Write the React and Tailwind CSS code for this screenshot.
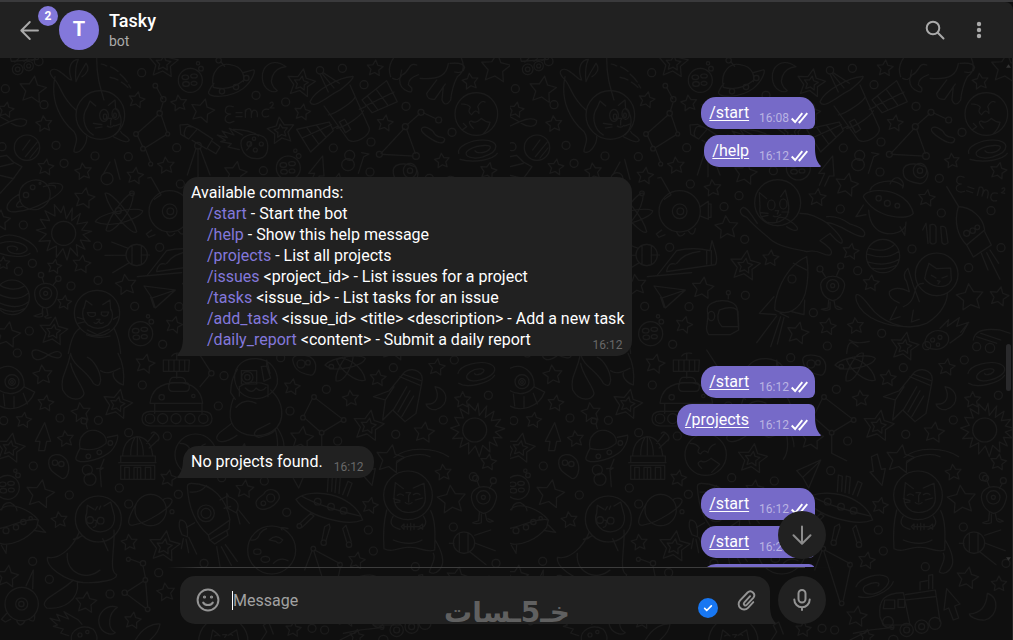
import React from "react";

/* ---------- wallpaper ---------- */

const STARS = [
  [98, 270, 42, 8], [410, 300, 25, 12], [537, 310, 25, -8], [607, 333, 37, 14], [907, 337, 25, 10],
  [1125, 205, 25, 5], [1411, 245, 25, -8], [1487, 205, 46, 6], [18, 330, 24, 10], [132, 372, 25, -6],
  [1155, 370, 25, 8], [498, 497, 26, -5], [137, 502, 25, 8], [250, 515, 26, -8], [405, 528, 26, 8],
  [706, 520, 36, 10], [1326, 483, 23, -6], [1465, 513, 26, 12], [253, 595, 32, 10], [0, 662, 32, 5],
  [163, 800, 22, 10], [245, 793, 28, 8], [10, 790, 20, 0], [378, 855, 32, -8], [193, 908, 22, 8],
  [22, 1005, 40, 10], [522, 975, 26, 14], [608, 565, 26, -6], [1010, 555, 36, 12], [922, 593, 27, 6],
  [650, 683, 36, -5], [1022, 755, 25, 10], [782, 775, 25, 5], [578, 865, 34, 8], [1083, 850, 25, 6],
  [1380, 893, 42, -6], [1467, 890, 30, 12], [863, 1000, 34, 12], [953, 980, 26, 10],
  [1037, 978, 25, -6], [1250, 595, 26, 8], [435, 1092, 30, 12], [128, 1125, 30, -6], [137, 1210, 25, 8],
  [243, 1238, 30, -8], [71, 1261, 24, 8], [197, 1317, 25, -8], [120, 1483, 44, 10], [178, 1560, 25, -8],
  [388, 1628, 25, -6], [505, 1435, 25, 10], [734, 1468, 28, 6], [876, 1161, 25, 10], [1052, 1196, 25, -6],
  [905, 1315, 36, 8], [1272, 1298, 32, 8], [1134, 1135, 25, 6], [1310, 1102, 26, 8], [1388, 1200, 25, 0],
  [1465, 1387, 25, 8], [1330, 1418, 25, -6], [1170, 1378, 44, 10], [1110, 1517, 25, 12], [1355, 1500, 44, -6],
  [1070, 1682, 26, 10], [22, 1730, 34, 8], [258, 1808, 33, 6], [498, 1777, 28, -8], [398, 1862, 26, 8],
  [880, 1888, 24, 6], [1372, 1735, 34, 10], [1467, 1752, 24, 0], [1040, 1850, 32, 8], [1070, 1910, 22, 6],
];

const DOUBLE_STARS = [
  [490, 190, 46, 5], [903, 250, 44, 10], [843, 393, 42, -8], [160, 995, 44, 8], [705, 798, 47, 8],
  [1183, 1040, 44, 10], [352, 1213, 46, 12], [30, 1345, 46, 10], [493, 1640, 48, 8], [1105, 1278, 48, 10],
  [727, 1377, 46, 8],
];

const DOTS = [
  [16, 266], [132, 314], [425, 218], [768, 286], [857, 306], [1027, 205], [1092, 254], [1218, 319],
  [1356, 397], [1113, 426], [1000, 444], [530, 443], [385, 470], [285, 468], [192, 490], [168, 436],
  [790, 512], [1110, 516], [70, 675], [293, 738], [479, 742], [97, 790], [55, 814], [213, 858],
  [294, 841], [404, 919], [537, 920], [88, 993], [488, 1033], [1288, 535], [991, 627], [642, 620],
  [687, 587], [704, 718], [541, 552], [1206, 747], [1043, 812], [706, 886], [910, 938], [1376, 803],
  [1294, 639], [1443, 632], [1473, 743], [952, 1038], [1115, 1000], [1250, 1037], [52, 1059],
  [427, 1155], [672, 1127], [655, 1218], [870, 1233], [979, 1168], [1180, 1103], [1465, 1186],
  [1330, 1260], [1187, 1303], [1013, 1323], [386, 1298], [502, 1308], [180, 1254], [295, 1261],
  [11, 1262], [100, 1398], [208, 1485], [358, 1464], [535, 1483], [386, 1512], [793, 1443], [860, 1537],
  [1105, 1590], [1120, 1653], [1360, 1581], [98, 1684], [148, 1738], [330, 1782], [476, 1718],
  [612, 1690], [1246, 1700], [1488, 1690], [974, 1890], [665, 1433], [962, 1412], [842, 1073],
  [1363, 1080], [6, 440], [1420, 1430], [936, 1885],
];

function starPoints([cx, cy, r, rot], inner = 0.5) {
  return Array.from({ length: 10 }, (_, i) => {
    const a = ((rot - 90 + i * 36) * Math.PI) / 180;
    const d = i % 2 ? r * inner : r;
    return `${(cx + d * Math.cos(a)).toFixed(1)},${(cy + d * Math.sin(a)).toFixed(1)}`;
  }).join(" ");
}

const ring = (x, y, rx, ry = rx) =>
  `M${x - rx} ${y}a${rx} ${ry} 0 1 0 ${rx * 2} 0a${rx} ${ry} 0 1 0 ${-rx * 2} 0`;

const DOODLES = [
  /* diving cat */
  ring(301, 345, 73),
  "M262 322L270 303L287 318M325 316L345 300L347 326M262 322C245 345 248 385 280 405M347 326C372 350 366 385 345 405",
  ring(312, 346, 13, 18) + ring(347, 342, 11, 16) + ring(315, 350, 5, 8) + ring(345, 346, 4, 7),
  "M326 355h10l-4 6v14M322 378q10 8 20-2M280 370l26 4M286 384l20-3M360 372l-16 6",
  "M228 330C180 290 185 255 158 232C140 212 158 200 180 215C200 228 205 240 215 240C200 200 215 180 235 178C225 200 225 220 228 245C235 225 250 205 258 190C270 205 262 220 246 230",
  "M290 175C290 230 300 260 312 300M165 230C150 300 180 360 222 395C240 420 220 440 222 455C240 465 262 430 260 410M340 410C370 425 385 430 388 420C380 405 365 405 362 395",
  /* comet dashes */
  "M304 192q10 2 16 6M332 200q12 5 22 14M360 222q14 12 22 24M386 254l6 10M330 232q14 2 24 8M364 246q12 8 20 16",
  /* constellations */
  "M470 262L488 296M489 308L481 334M474 345L414 398M484 346L501 396M413 408L428 440M436 446L451 485M497 405L436 443",
  ring(466, 257, 7) + ring(490, 298, 8) + ring(479, 340, 8) + ring(408, 402, 7) + ring(503, 402, 6) + ring(429, 446, 7) + ring(452, 492, 6),
  "M1143 460L1212 386M1220 388L1246 460M1148 463L1238 468M1222 374L1258 342M1270 338L1308 356",
  ring(1138, 463, 9) + ring(1216, 380, 9) + ring(1248, 468, 10) + ring(1263, 337, 9) + ring(1316, 360, 9),
  "M948 1196L1026 1256M936 1198L912 1246M916 1256L958 1293M1024 1262L972 1294M965 1304V1360L1010 1382",
  ring(942, 1191, 7) + ring(909, 1253, 7) + ring(1031, 1260, 7) + ring(965, 1298, 7),
  "M392 1678L421 1688M429 1698L436 1732M430 1744L380 1776M382 1784L436 1824M437 1746L443 1820",
  ring(385, 1678, 6) + ring(429, 1690, 8) + ring(436, 1740, 7) + ring(374, 1778, 8) + ring(443, 1828, 7),
  "M944 1650L1018 1690M936 1652L914 1710M1021 1702L1000 1800M942 1655L990 1806",
  ring(940, 1646, 7) + ring(1020, 1694, 7) + ring(995, 1810, 7),
  "M590 1050L630 1112M628 1126L600 1160",
  ring(634, 1120, 8),
  /* moons */
  "M858 200C815 170 785 200 787 235C790 275 825 280 832 272C800 250 815 205 858 200Z",
  "M1305 1160C1345 1165 1350 1215 1310 1228C1295 1232 1280 1222 1278 1212C1310 1215 1320 1190 1305 1160Z",
  "M352 1822C320 1810 292 1840 297 1870C302 1900 335 1908 346 1898C320 1885 325 1840 352 1822Z",
  "M1432 1780C1470 1790 1465 1850 1425 1860C1400 1862 1380 1850 1378 1842C1415 1840 1430 1815 1432 1780Z",
  /* cratered planets */
  ring(571, 241, 36) + ring(556, 232, 10, 7) + ring(582, 228, 10, 6) + ring(558, 252, 10, 7) + ring(582, 250, 9, 6) + ring(594, 190, 5) + ring(603, 206, 7),
  ring(865, 504, 36) + ring(850, 495, 10, 7) + ring(876, 491, 10, 6) + ring(852, 515, 10, 7) + ring(876, 513, 9, 6) + ring(886, 452, 5) + ring(896, 468, 7),
  ring(422, 1001, 36) + ring(407, 992, 10, 7) + ring(433, 988, 10, 6) + ring(409, 1012, 10, 7) + ring(433, 1010, 9, 6) + ring(444, 949, 5) + ring(454, 965, 7),
  ring(22, 1462, 36) + ring(8, 1453, 10, 7) + ring(33, 1450, 10, 6) + ring(10, 1472, 10, 7) + ring(34, 1470, 9, 6) + ring(46, 1412, 5) + ring(54, 1426, 7),
  ring(815, 1650, 72) + ring(772, 1655, 11, 8) + ring(796, 1678, 13, 9) + "M752 1620q20 4 28-20q10-12 20-14M808 1620q20-20 40 0q-10 16-20 4zM820 1690q20-20 44-8M846 1590q-10-12 18-4",
  /* flying saucers */
  "M640 262C630 215 660 185 695 195C725 200 735 225 730 245M626 275C620 295 690 295 730 265C760 240 770 205 758 210L730 218M626 275Q632 260 642 250M640 262Q690 275 732 240M662 185l12 14",
  ring(656, 181, 8) + ring(666, 274, 8) + ring(708, 261, 8) + ring(739, 234, 8),
  "M240 1345C232 1310 260 1285 290 1292C315 1300 322 1318 318 1330M228 1372C222 1395 290 1385 325 1360C352 1340 358 1300 350 1306L322 1312M228 1372Q232 1358 240 1345Q285 1358 318 1330",
  ring(252, 1263, 9) + ring(265, 1369, 7) + ring(298, 1357, 7) + ring(331, 1329, 7) + "M258 1272l4 14",
  "M888 1498C930 1460 1060 1480 1088 1560C1040 1580 920 1550 888 1498ZM905 1488C940 1510 1020 1535 1080 1548M982 1475l3-50 12 4-2 45M1005 1478l4-50 12 4-4 48M1028 1484l16-40 12 6-14 38",
  ring(953, 1505, 10) + ring(993, 1520, 10) + ring(1031, 1532, 10) + ring(898, 1578, 7) + ring(971, 1628, 8) + ring(1047, 1634, 8),
  "M900 1570l32-30 10 8-36 34M966 1620l8-40 14-8 2 10-12 40M1040 1626l-12-40 10-10 16 50",
  /* alien saucer */
  ring(36, 1145, 21) + ring(36, 1146, 10) + ring(36, 1146, 4),
  "M0 1105C40 1085 75 1120 72 1160M0 1172C30 1190 60 1178 72 1160M72 1160l32 16M0 1218C30 1235 85 1225 104 1176M10 1182l4 36M42 1190v34M70 1180l12 32",
  /* formula */
  "M700 320q-24-8-24 14q2 8 16 8q-20 4-16 20q8 12 26 2M708 338h18M708 350h18M736 352v-22q2 10 2 0q12-10 16 4v18q0-20 8-22q12 0 10 20M806 328q-18-4-20 12q2 16 20 8M810 310q8-8 10 2q-2 6-10 12h12",
  "M1362 532q-22-10-22 12q2 8 14 8q-20 4-14 18q8 10 24 4M1374 560l18 6M1370 572l18 6M1402 586l6-24q10-4 12 8l-4 18q6-22 14-18q8 2 2 24M1462 580q-18-6-20 12q2 14 18 10M1476 566q10-6 8 4q-4 6-10 8l10 2",
  /* antenna satellite */
  "M930 305C940 330 980 290 1020 270C1060 240 1065 225 1055 230C1020 232 945 270 930 305ZM960 222L985 276M966 220L1002 264M970 218L1018 250M972 318L1045 420C1070 435 1110 405 1108 385L1050 255M985 345C1010 340 1060 305 1066 290M1010 385C1040 380 1085 345 1090 332",
  ring(960, 211, 11),
  "M1018 366l16-8 18 30-16 10zM1020 368l16 28M1086 300L1160 242L1192 305L1116 338ZM1104 290l30 40M1130 270l34 46M1096 318l86-42M890 388L988 366L1000 392L932 456ZM920 382l36 50M950 376l28 36M906 414l88-40M1078 328l18-8M1000 385l14-6",
  /* meteor */
  "M724 440C715 405 760 395 790 410C810 425 808 470 780 475C750 480 730 465 724 440ZM652 405l30 8-16-20 36 12-14-20 40 20M652 405l24 16-14 4 32 6-10 10 34 8M700 388q50 0 76 20M740 450q10-8 12-24",
  ring(748, 432, 7) + ring(766, 450, 6) + ring(762, 416, 5) + ring(784, 432, 6),
  "M214 1920C210 1890 245 1870 280 1888C292 1900 292 1920 290 1920M150 1855l30 8-10-20 36 14-14-22 42 24 12 14M150 1855l22 20-12 4 30 8-8 12 24 8",
  ring(240, 1905, 6) + ring(262, 1896, 5),
  "M1245 1030C1245 1000 1280 980 1310 1000C1325 1020 1310 1045 1280 1048C1255 1048 1245 1040 1245 1030ZM1290 985l26-26-4 20 36-26-8 26 36-12-24 30M1376 967l-20 36-36 26",
  ring(1268, 1020, 6) + ring(1290, 1012, 6) + ring(1284, 1034, 5),
  /* telescope */
  "M540 375l22-2 30 14-26 30-24-14ZM566 417q-20-6-10-30q4-12 20-6M592 387l46 30-18 30-44-26M638 425l22 16-12 20-24-14M594 445V530M588 445L562 525M600 445L630 525",
  ring(594, 437, 10),
  /* dog legs */
  "M1172 230C1160 200 1180 175 1180 175M1178 235q18 10 28-10M1206 225C1230 215 1225 185 1250 195M1205 210l-6 30q0 24 24 34q16 6 12-10l-10-10q0-20 30-30M1260 235C1320 240 1340 225 1345 190M1310 240l-30 40q0 20 24 18l32-46M1330 260l-4 40q10 24 26 0q4-40 20-70q30-20 10-60M1350 190q40-4 44 12q-4 20-30 14",
  /* earths */
  ring(1429, 342, 64) + "M1385 312q20 0 26 10q-10 14 4 22q12-20 22-4q0-14-4-20q10-20 22-14M1420 385q-20-20-6-22q12 10 30-8q10 10 26 12q-4 20-22 36M1390 370l10 10-14 10",
  ring(587, 1364, 62) + "M540 1330q20 0 28 14q-10 14 4 18q10-16 22-4q4-20 22-26M575 1405q-20-16-2-22q10 8 30-8l26 18-24 24",
  /* spirals */
  "M1376 460C1370 440 1410 420 1450 420C1500 420 1500 455 1450 470C1420 480 1390 470 1400 455C1420 435 1480 430 1470 445C1460 460 1430 462 1425 452M1380 478C1420 490 1480 480 1492 460",
  "M0 712C40 690 110 730 112 755M0 730C40 715 90 735 80 752C60 770 20 760 22 742C40 732 60 744 50 750M0 760C40 775 80 770 90 760",
  "M1374 1120C1380 1095 1440 1080 1470 1092C1500 1105 1480 1130 1440 1140C1400 1150 1390 1130 1410 1116C1430 1102 1460 1104 1450 1116C1440 1126 1424 1126 1424 1120M1376 1150C1400 1166 1470 1150 1484 1126",
  "M1038 1760C1050 1730 1110 1718 1130 1730C1150 1745 1120 1775 1090 1782C1060 1785 1050 1765 1070 1756C1090 1744 1116 1746 1104 1758M1046 1790C1080 1800 1140 1775 1150 1745",
  /* infinities and peanuts */
  "M1300 395C1270 370 1250 385 1276 405C1310 430 1330 435 1334 420C1336 405 1310 420 1300 395Z",
  "M0 378C20 370 60 345 80 362C80 385 50 380 38 372C20 360 0 350 0 350",
  "M96 1058C100 1040 125 1055 140 1062C160 1075 186 1080 184 1062C175 1045 150 1062 140 1068C110 1090 96 1075 96 1058Z",
  ring(1049, 466, 15) + ring(1044, 494, 19, 18) + ring(321, 536, 18) + ring(262, 1410, 15) + ring(270, 1438, 18),
  "M1075 520l16-50 16-8-22-4M344 478l16 60M330 486l-20 36M300 1408l12-30M304 1460l-4-50 10-6-20 2",
  /* arrows */
  "M968 468l-42 52h18l-16 36M968 468l4 60h-14l-14 30M134 1268l-28 56h14l-4 28h18l6-28h12ZM1084 1370l6 44-10 2 36 40 10-50-12 2-12-46ZM1310 1766l-8 64 14-6 14 36 16-6-12-36 16-6Z",
  /* potatoes */
  "M1180 520C1175 490 1210 485 1245 500C1265 525 1245 555 1225 550C1200 545 1182 540 1180 520Z" + ring(1230, 512, 8) + ring(1230, 512, 20, 22),
  "M880 1088C870 1065 900 1060 930 1070C960 1090 945 1130 930 1125C900 1120 885 1110 880 1088Z" + ring(903, 1092, 12) + ring(924, 1088, 7),
  "M146 1390C145 1360 180 1355 200 1380C215 1410 200 1440 185 1435C165 1420 148 1415 146 1390Z" + ring(165, 1388, 8) + ring(184, 1392, 8),
  "M768 1508C770 1490 790 1490 796 1475C815 1460 840 1475 838 1495C825 1525 770 1545 768 1508Z" + ring(812, 1494, 12) + ring(790, 1510, 7),
  /* ringed and striped planets */
  ring(81, 443, 38) + "M68 450l22-30M76 470l36-44M90 474l24-30",
  "M0 470l20-4 20 20 26 14-26 36-40-10M0 500l40-10M0 580L44 532",
  "M58 590C55 550 100 530 130 545C155 560 160 600 130 620C100 640 60 625 58 590ZM58 582C10 610 10 640 50 635C110 630 190 580 188 560C184 545 150 550 146 552M62 600C40 620 50 625 70 618M130 560q40-10 36 4",
  ring(98, 562, 7) + ring(78, 585, 8) + ring(120, 550, 3),
  ring(36, 892, 52) + "M0 856q40 22 74 2M-10 880q60 30 94 0M-10 905q60 30 96 0M0 925q40 20 76 0",
  ring(1119, 768, 50) + "M1076 745q50 16 78-12M1070 762q60 20 96-8M1074 786q50 16 94-8M1084 804q40 8 76-8",
  ring(452, 1530, 47) + "M408 1512C380 1560 380 1580 400 1575C440 1570 520 1520 516 1500C510 1490 490 1496 490 1500" + ring(516, 1535, 6),
  "M0 1530C30 1500 90 1530 115 1560L110 1582C80 1620 30 1640 0 1630M0 1585C30 1580 90 1550 115 1560M5 1530q4-24 26-22q20 10 20 24M20 1636l-2 24-14-24M115 1575l22 22-36-6",
  ring(70, 1566, 8) + ring(48, 1582, 8) + ring(18, 1592, 9) + ring(92, 1555, 5),
  "M1060 590C1070 560 1190 560 1210 640C1200 660 1100 660 1060 590ZM1080 570C1090 545 1150 530 1180 560M1076 630C1080 720 1170 710 1184 680M1140 552q10-22 26-18q20 12 12 30M1060 615l-22 35 30-6M1170 680l14 26 4-40",
  ring(1106, 595, 8) + ring(1132, 610, 9) + ring(1162, 617, 7),
  /* sun */
  ring(191, 700, 36),
  "M191 618l8 38 18-32-2 38 26-22-10 32 32-6-18 24 30 4-26 10 22 20-30-4 14 28-26-14 4 34-22-24-10 36-12-34-20 26 0-34-28 14 10-30-34 2 22-22-30-12 28-6-16-26 28 4-14-30 30 16-2-34 20 24Z",
  ring(1424, 1290, 36),
  "M1434 1210l4 36 22-28-4 34 26-18-8 28 28-4-16 20 28 8-28 10 20 18-26-2 12 26-24-12 2 30-22-20-10 34-12-32-20 24 0-34-26 14 8-28-30 2 18-20-24-12 26-8-14-24 26 2-10-28 26 16 0-30 20 20Z",
  /* atoms */
  "M315 580C330 570 400 650 410 695C400 710 330 640 315 580ZM286 665C300 640 400 620 428 632C430 650 340 690 286 665ZM400 580C390 570 330 640 318 690C330 710 400 640 400 580Z" + ring(355, 632, 9) + ring(396, 580, 7),
  "M1010 1080C1030 1060 1090 1100 1096 1140C1070 1150 1020 1110 1010 1080ZM975 1095C1000 1070 1080 1060 1096 1075C1090 1100 1000 1120 975 1095ZM1060 1060C1040 1050 1004 1120 1008 1142C1030 1150 1060 1100 1060 1060Z" + ring(994, 1100, 7),
  /* round probes */
  ring(509, 634, 62) + ring(509, 634, 22) + ring(511, 634, 10),
  "M443 534l10-2 30 52-20 14M455 690l-16 12 8 10 18-8M500 696q8 22 24 4M536 694q14 20 20-8",
  "M571 620l24-16v54l-24-10M595 612h8v40h-8",
  ring(65, 1812, 50) + ring(65, 1812, 18) + ring(64, 1812, 8) + "M78 1758l22-48-2 56M20 1840l-16 18 12 8 16-8M50 1862q10 24 24 2M86 1858q20 14 18-12",
  /* sputniks */
  ring(410, 765, 32) + "M396 738v54M424 736v58M378 765L315 766M384 745L335 726M388 788L338 818M424 765h24",
  ring(1392, 1628, 32) + "M1404 1600v58M1378 1602v54M1424 1606L1472 1590M1426 1630L1486 1652M1410 1656L1458 1694M1362 1630h-14",
  /* planes */
  "M412 830L545 818M440 828L500 752Q550 740 600 752L606 722L616 754Q624 782 616 794L470 815M470 812q6-26 26-20M500 790q20-30 70-36M590 752v40M604 752v40",
  "M432 858l94 12-60 54-10-30ZM456 894l70-24M462 922l-10-30",
  "M860 1412l72-32-36 84-18-32ZM878 1432l54-50M860 1412l18 20",
  /* rockets */
  "M890 770C820 800 790 900 795 930C830 950 870 930 886 880C896 840 895 800 890 770ZM792 890l-44 50 50 4M884 900l-2 44-40-10M850 790l40 20M800 948l-60 80M812 950l-30 90M822 952l-20 80M810 940l26 12",
  ring(846, 837, 12),
  "M1310 560l36 60M1345 620C1330 670 1345 710 1370 735L1424 690C1420 650 1380 620 1345 620ZM1370 735l20 36 54-36-20-40M1414 760l20 50M1430 758l40 80M1440 750l26 40" + ring(1370, 700, 9) + ring(1388, 692, 8) + ring(1402, 682, 7),
  "M562 1460C565 1520 585 1570 625 1605L690 1560C680 1500 640 1450 575 1450C566 1450 562 1454 562 1460ZM570 1476q30 4 50-20M625 1605l4 16 58-34 2-24M632 1622l12 10 40-26-4-14M660 1500l22-12M672 1525l20-6M584 1568l-24 14",
  ring(618, 1540, 25) + ring(618, 1540, 15) + "M680 1480l6 10c30 10 34 30 22 48l-26-14zM540 1560c20 0 24 20 22 50l-16-6c-10-20-10-34-6-44zM550 1616l-6 30M558 1618l8 40M566 1612l24 50M710 1536l10 36M716 1530l32 40M650 1640l10 60M664 1640l30 56M676 1634l36 50",
  "M1215 1115C1240 1100 1275 1115 1265 1150L1248 1240L1215 1265L1178 1230L1148 1260L1156 1200L1120 1190L1168 1172ZM1200 1130l60 26M1208 1122l56 20M1180 1230l40-70M1194 1236l36-64M1205 1250l36-62M1156 1200l26-40",
  /* one-eyed aliens */
  ring(137, 880, 18) + ring(137, 880, 6) + ring(123, 825, 8) + ring(175, 836, 8),
  "M126 832l6 18M170 842l-10 12M104 880C104 840 170 840 172 880C170 905 155 922 137 924C118 920 104 905 104 880ZM128 924l-2 16-24 8q16 6 26 0v-16M140 926l4 20-10 4q4 8 20 2",
  ring(968, 857, 18) + ring(968, 857, 6) + ring(930, 807, 9) + ring(992, 798, 9) + "M936 814l10 16M988 808l-8 18M932 855C934 820 1002 820 1004 855C1000 885 984 900 968 902C952 898 934 885 932 855ZM956 900l-2 24-20 4q16 6 26 0v-22M972 902l4 20q4 10 20 4l-16-8",
  ring(1450, 1492, 20) + ring(1450, 1492, 6) + ring(1427, 1435, 9) + ring(1480, 1442, 9) + "M1432 1444l6 16M1476 1452l-8 14M1414 1490C1416 1450 1486 1450 1490 1490C1484 1525 1466 1538 1450 1540C1434 1536 1416 1520 1414 1490ZM1438 1538l-2 24-18 6q12 6 26 0v-26M1456 1540l4 20q6 10 20 4l-16-8",
  /* grumpy cat */
  ring(291, 939, 68),
  "M252 925l6-24 18 14M308 914l22-14 2 30M250 925q-8 30 14 50q30 20 60 0q20-20 10-46M262 938h24v8q-10 8-20 0zM304 936h22l-4 10q-10 6-18-2zM290 958h10l-4 6q4 10 14 4M296 964q-6 10-14 4M250 958l-18-6M252 966l-18 4M340 958l14-8M240 985C215 1000 210 1040 205 1060M342 985C355 1010 360 1040 362 1060M262 990l30 14 36-16M260 1004q30 14 70 4",
  "M212 1060C200 1120 180 1130 188 1170C210 1210 250 1200 252 1180C250 1160 215 1120 212 1090M212 1062C220 1100 260 1110 280 1150C300 1165 300 1150 302 1140C300 1110 280 1080 262 1072M302 1112C320 1125 340 1115 360 1105M354 1060C370 1090 374 1120 370 1155C350 1150 336 1130 340 1118",
  /* floating cat */
  ring(803, 608, 69),
  "M750 620l-2-42 22 18M812 590l14-20 8 34M750 620q-6 30 20 46q34 10 60-16q10-20 4-46" + ring(784, 615, 11, 15) + ring(820, 612, 11, 15) + "M796 632h10l-4 10M790 648q10 6 22-4M752 638l22 2M756 650l18-4M836 636l-20 0",
  "M742 670C720 640 715 625 700 622C685 630 690 645 710 652C735 680 760 700 775 712C800 740 850 745 890 755C930 745 940 770 960 765C975 755 950 735 930 722L960 700C990 735 1000 735 996 720C980 690 960 680 950 668C920 650 900 640 870 640M950 668C990 670 1030 710 1060 710C1075 695 1050 680 1020 672C990 650 970 648 950 650M800 665C800 640 830 655 850 670C875 690 860 700 830 680",
  /* tumbling cat */
  ring(1280, 823, 64),
  "M1244 836C1250 800 1260 790 1256 790L1280 806L1322 804L1324 840L1318 850C1300 866 1262 862 1244 836ZM1264 826l14 8M1296 834l16-6M1282 842l8 2-6 8M1240 850C1200 850 1230 900 1180 920M1228 905q-20-50-34-100q-20 20-4 40l8 30q-40-20-60 0q-4 20 30 34M1040 905C1030 870 1050 880 1080 920C1110 960 1180 1000 1250 970C1300 940 1312 900 1312 880M1040 905C1060 960 1140 980 1190 980M1160 920l-20 40 30-10M1210 930l-6 36 24-8",
  /* helmet */
  "M592 930C590 895 680 890 682 930L686 990L660 1004H596C580 980 600 970 592 930ZM628 930q44-16 56 4l2 46h-50q-20-20-8-50ZM655 884v12" + ring(655, 878, 6) + ring(604, 948, 10, 14),
  /* rover */
  "M490 1080h78l-2 34h-76zM506 1080v34M522 1080v34M538 1080v34M554 1080v34M530 1060v20M530 1114v20M508 1150q2-18 12-18h22q14 0 16 18M450 1210q6-60 80-62q70 0 78 62ZM464 1212v28M606 1212v28M506 1160q0-12 12-12h38q12 0 12 12v0q0 14-12 14h-38q-12 0-12-14zM450 1234h162q24 2 24 22t-24 22H450q-24-2-24-22t24-22z",
  ring(485, 1192, 8) + ring(580, 1188, 5) + ring(450, 1256, 14) + ring(488, 1256, 15) + ring(528, 1256, 15) + ring(570, 1256, 15) + ring(610, 1256, 14),
  /* helmeted captain */
  "M704 1140C700 1090 740 1074 770 1076C810 1078 836 1110 832 1150C825 1175 800 1194 770 1196C730 1194 710 1172 704 1140ZM724 1112h46v40h-46zM718 1160q40-24 86-4v34M718 1160v28M736 1164q20 20 32 0q16 16 30-2M784 1100l16-2 12 36-20 10ZM800 1098v-18l10 40",
  ring(742, 1132, 17) + ring(742, 1132, 8),
  "M712 1108q-20 30-20 70l14 20M700 1195C680 1250 690 1290 740 1304C800 1316 850 1290 845 1230C840 1190 820 1180 812 1170M708 1222q26-30 60-12M695 1270l-36 28q-16 16-4 24q20 10 56-16M810 1270l-40 20q-16 16 6 22q40-8 50-22M832 1284q20 30 20 56M826 1288q16 60-6 90",
  /* observatory */
  "M356 1388h112M362 1388v-20h104v20M368 1366q4-50 44-56q40 4 46 56M392 1364q0-30 12-50M430 1364q0-30-12-50M412 1310v54M440 1330l26-32M448 1344l28-26M454 1300q6-10 20 6q6 10 0 16M362 1396v42h102v-42M362 1396h102M374 1438v-36h14v36M402 1438v-36h20v36M436 1438v-36h16v36M412 1402v36",
  /* laughing cat */
  ring(295, 1557, 69),
  "M260 1540l2-24 20 12M312 1518l20-12 8 30M260 1540q-12 30 18 50q30 14 56-8q16-20 6-46M282 1560l8 2-2 8q2 10-8 12M286 1530l6-10M298 1528l4-10" + ring(270, 1560, 10) + ring(302, 1562, 10) + "M238 1596C220 1640 180 1680 142 1672C138 1700 190 1740 250 1748C300 1750 350 1740 350 1724C325 1714 345 1650 342 1590M202 1660C196 1720 260 1745 300 1710M232 1744C240 1800 190 1830 140 1824C110 1800 180 1780 220 1740M246 1608l-26 10q10 2 24-10M308 1616l16 36",
  /* meditating cat */
  ring(1224, 1486, 73),
  "M1182 1490l4-42 24 18M1240 1464l32-14 4 42M1182 1490q-2 30 24 44q20 8 46-2q26-12 24-40M1192 1486q10-8 18 0M1240 1484q12-8 20 0M1218 1478h14l-6 8v20M1216 1508q10 8 20 0M1180 1496l20 6M1184 1508l16-2M1268 1494l-22 6",
  "M1160 1530C1150 1570 1150 1620 1152 1646C1180 1660 1200 1640 1226 1642C1260 1640 1280 1660 1304 1650C1306 1600 1306 1560 1292 1532M1180 1548q-20 30 20 40M1270 1548q20 30-16 40M1180 1620q50 20 86 0M1204 1580l8-8v16zM1212 1580h46l10-8v16l-10-8M1222 1572v16M1232 1570v20M1242 1572v16M1300 1660C1310 1680 1290 1700 1288 1716C1310 1730 1330 1700 1328 1680C1326 1650 1310 1630 1306 1620",
  /* comet trail */
  "M1182 1372C1220 1340 1300 1340 1346 1370M1190 1384C1230 1360 1270 1360 1290 1370",
  /* truck */
  "M1110 1850C1105 1800 1120 1780 1180 1778L1200 1875H1120ZM1124 1800h30v26h-34zM1164 1798h20v24h-20zM1186 1784l90-14 14 94M1186 1800l90-10M1230 1770v-24l22-4M1256 1766v-40l12-2v42",
  ring(1134, 1866, 16) + ring(1190, 1890, 20) + ring(1235, 1880, 20) + ring(1275, 1870, 18) + ring(1190, 1890, 9) + ring(1235, 1880, 9),
  "M30 168l4 16 80-6 6-16M44 186l12-10M72 184l10-8M96 182l8-6" + ring(53, 208, 16) + ring(86, 198, 14) + ring(116, 184, 13) + ring(53, 208, 7) + ring(86, 198, 6),
  "M1390 1020C1394 990 1430 985 1470 990L1500 1000M1400 1010l60 20M1412 1000l60 20" + ring(1400, 1040, 12) + ring(1440, 1044, 14),
  /* bottom edge */
  ring(670, 1925, 74),
  "M632 1920l6-30 18 14M690 1902l20-12 6 30M644 1908q8-6 16 0M684 1906q8-6 14 0M668 1904h12l-6 8M406 1920C430 1880 460 1870 480 1872C476 1900 460 1910 450 1920M784 1920l16-24-10-20 16-10 14 36M1020 1920l60-30 70-8M1080 1890l-50 10" + ring(1146, 1882, 6) + ring(1150, 1920, 14),
  /* extras */
  "M1238 690l10-20 6 60M1260 675q14-6 18 6v46q-10 10-18 0zM1292 680q14-4 16 8l6 40q-10 10-18 0z",
  "M545 1060q-20-4-30 8M1018 1020q20 14 60 4M1010 1060q4-40 20-30l14 10",
];

function Wallpaper() {
  return (
    <svg className="absolute inset-0 size-full" aria-hidden="true">
      <defs>
        <pattern id="space" width="510" height="1104" patternUnits="userSpaceOnUse">
          <g
            transform="translate(0 -58) scale(0.333333)"
            fill="none"
            stroke="#1b1b1b"
            strokeWidth="3.4"
            strokeLinejoin="round"
            strokeLinecap="round"
          >
            {STARS.map((s, i) => (
              <polygon key={`s${i}`} points={starPoints(s)} />
            ))}
            {DOUBLE_STARS.map((s, i) => (
              <g key={`d${i}`}>
                <polygon points={starPoints(s)} />
                <polygon points={starPoints([s[0], s[1], s[2] * 0.5, s[3]])} />
              </g>
            ))}
            {DOTS.map(([x, y], i) => (
              <circle key={`c${i}`} cx={x} cy={y} r="12" />
            ))}
            {DOODLES.map((d, i) => (
              <path key={`p${i}`} d={d} />
            ))}
          </g>
        </pattern>
      </defs>
      <rect width="100%" height="100%" fill="url(#space)" />
    </svg>
  );
}

/* ---------- icons ---------- */

function Stroke({ className = "size-6", width = 2, children }) {
  return (
    <svg
      viewBox="0 0 24 24"
      className={className}
      fill="none"
      stroke="currentColor"
      strokeWidth={width}
      strokeLinecap="round"
      strokeLinejoin="round"
      aria-hidden="true"
    >
      {children}
    </svg>
  );
}

const BackIcon = () => (
  <Stroke width={1.9}>
    <path d="M21 12.500H4.500M12.800 4L4.300 12.500l8.500 8.500" />
  </Stroke>
);

const SearchIcon = () => (
  <Stroke width={2}>
    <circle cx="10" cy="10" r="6.300" />
    <path d="M14.800 14.800l5.700 5.700" />
  </Stroke>
);

const MoreIcon = () => (
  <svg viewBox="0 0 24 24" className="size-6" fill="currentColor" aria-hidden="true">
    <circle cx="12" cy="6" r="2.200" />
    <circle cx="12" cy="12" r="2.200" />
    <circle cx="12" cy="18" r="2.200" />
  </svg>
);

const SmileIcon = () => (
  <Stroke width={2}>
    <circle cx="12" cy="12" r="10.400" />
    <path d="M7.200 14.600c2 3.200 7.600 3.200 9.600 0" />
    <circle cx="8.500" cy="9" r="0.600" fill="currentColor" />
    <circle cx="15.500" cy="9" r="0.600" fill="currentColor" />
  </Stroke>
);

const ClipIcon = () => (
  <Stroke width={1.900}>
    <path
      transform="translate(0.500 0)"
      d="M15.600 8.200l-5.900 6.400a1.700 1.700 0 0 0 2.500 2.300l6.600-7.100a3.900 3.900 0 0 0-5.700-5.300L5.600 12.400a5.400 5.400 0 0 0 7.900 7.400l5.300-5.700"
    />
  </Stroke>
);

const MicIcon = () => (
  <Stroke width={2}>
    <rect x="8.500" y="2" width="7" height="12.600" rx="3.500" />
    <path d="M4.300 11.500a7.700 7.700 0 0 0 15.400 0M12 19.200v2.800" />
  </Stroke>
);

const DownIcon = () => (
  <Stroke width={2}>
    <path d="M12 3.500v17M3.500 12.200l8.500 8.500 8.500-8.500" />
  </Stroke>
);

const Ticks = () => (
  <svg
    viewBox="0 0 17 12"
    className="mt-[3px] h-3 w-[17px]"
    fill="none"
    stroke="#fff"
    strokeWidth="1.900"
    aria-label="Read"
  >
    <path d="M0.700 6.500l3.400 3.500 7.200-8.800M7.700 9.500l0.900 0.800 7.700-9.100" />
  </svg>
);

function Tail({ side, className }) {
  return (
    <svg
      viewBox="0 0 7 18"
      aria-hidden="true"
      className={`absolute bottom-0 h-[18px] w-[7px] ${side === "left" ? "-left-[6px] -scale-x-100" : "-right-[6px]"} ${className}`}
    >
      <path d="M0 0h1C1.200 8 3 13.500 6.700 16.700Q7.300 18 5.800 18H0z" fill="currentColor" />
    </svg>
  );
}

/* ---------- messages ---------- */

const CORNERS = {
  first: "rounded-tr-[15px] rounded-br-[6px]",
  middle: "rounded-r-[6px]",
  last: "rounded-tr-[6px]",
};

function Outgoing({ text, time, place = "first" }) {
  return (
    <article
      className={`relative mr-[11px] flex h-8 shrink-0 items-start self-end rounded-l-[15px] bg-[#766ac8] pl-2 pr-[7px] text-white ${CORNERS[place]}`}
    >
      <a href="#command" className="mt-[5px] leading-[21px] underline underline-offset-2">
        {text}
      </a>
      <span className="ml-[10px] mt-3 flex text-xs leading-[18px] text-[#bab4e3]">
        <time className="mr-[2px]">{time}</time>
        <Ticks />
      </span>
      {place === "last" && <Tail side="right" className="text-[#766ac8]" />}
    </article>
  );
}

const COMMANDS = [
  ["/start", " - Start the bot"],
  ["/help", " - Show this help message"],
  ["/projects", " - List all projects"],
  ["/issues", " <project_id> - List issues for a project"],
  ["/tasks", " <issue_id> - List tasks for an issue"],
  ["/add_task", " <issue_id> <title> <description> - Add a new task"],
  ["/daily_report", " <content> - Submit a daily report"],
];

function Incoming({ time, children }) {
  return (
    <article className="relative ml-[3px] flex shrink-0 self-start rounded-r-[15px] rounded-tl-[15px] bg-[#212121] px-2 pb-[6px] pt-[5px] leading-[21px] text-white">
      {children}
      <time className="absolute bottom-[2px] right-[10px] text-xs leading-[18px] text-[#686868]">{time}</time>
      <Tail side="left" className="text-[#212121]" />
    </article>
  );
}

export default function App() {
  return (
    <div className="flex h-screen flex-col overflow-hidden border-t-2 border-[#3a3a3c] bg-[#0f0f0f] font-['Roboto',sans-serif] text-base">
      <header className="flex h-14 shrink-0 items-center rounded-tr-lg bg-[#212121] pl-[17px] pr-[22px] text-[#aaaaaa]">
        <button type="button" aria-label="Back, 2 unread" className="relative">
          <BackIcon />
          <span className="absolute -top-3 left-[21px] flex size-5 items-center justify-center rounded-full bg-[#8378db] text-xs font-bold text-white">
            2
          </span>
        </button>
        <div className="ml-[18px] flex size-10 items-center justify-center rounded-full bg-[#8378db] pb-[2px] text-xl font-bold text-white">
          T
        </div>
        <div className="ml-[10px] flex-1 pt-[2px]">
          <h1 className="text-lg font-medium leading-5 text-white">Tasky</h1>
          <p className="text-sm leading-5">bot</p>
        </div>
        <button type="button" aria-label="Search" className="mr-5">
          <SearchIcon />
        </button>
        <button type="button" aria-label="More actions">
          <MoreIcon />
        </button>
      </header>

      <div className="relative flex min-h-0 flex-1 flex-col border-r border-[#242424]">
        <Wallpaper />

        <main className="relative flex min-h-0 flex-1">
          <div className="flex min-w-0 flex-1 justify-center overflow-hidden">
            <div className="relative flex w-full max-w-[646px] flex-col pt-[39px]">
              <div className="flex flex-col gap-[10px]">
                <div className="flex flex-col gap-[6px]">
                  <Outgoing text="/start" time="16:08" />
                  <Outgoing text="/help" time="16:12" place="last" />
                </div>
                <Incoming time="16:12">
                  <div>
                    <p>Available commands:</p>
                    <ul className="pl-4">
                      {COMMANDS.map(([name, rest]) => (
                        <li key={name} className="whitespace-pre">
                          <a href="#command" className="text-[#8378db]">
                            {name}
                          </a>
                          {rest}
                        </li>
                      ))}
                    </ul>
                  </div>
                </Incoming>
                <div className="flex flex-col gap-[6px]">
                  <Outgoing text="/start" time="16:12" />
                  <Outgoing text="/projects" time="16:12" place="last" />
                </div>
                <Incoming time="16:12">
                  <p className="pr-[43px]">No projects found.</p>
                </Incoming>
                <div className="flex flex-col gap-[6px]">
                  <Outgoing text="/start" time="16:12" />
                  <Outgoing text="/start" time="16:26" place="middle" />
                  <Outgoing text="/start" time="16:26" place="middle" />
                </div>
              </div>
              <button
                type="button"
                aria-label="Go to bottom"
                className="absolute bottom-2 right-0 flex size-12 items-center justify-center rounded-full bg-[#212121] text-[#8c8c8c]"
              >
                <DownIcon />
              </button>
            </div>
          </div>
          <div className="flex w-[6px] shrink-0 flex-col items-start justify-between py-[6px]" aria-hidden="true">
            <svg viewBox="0 0 6 4" className="h-1 w-[5px]" fill="#333">
              <path d="M0 4L3 0l3 4z" />
            </svg>
            <div className="mt-[110px] h-[47px] w-[5px] rounded-sm bg-[#29292b]" />
            <svg viewBox="0 0 6 4" className="h-1 w-[5px]" fill="#333">
              <path d="M0 0h6L3 4z" />
            </svg>
          </div>
        </main>

        <footer className="relative flex shrink-0 flex-col items-center pr-[6px]">
          <div className="h-px w-full max-w-[670px] bg-linear-to-r from-transparent via-[#3c3c3c] via-5% to-transparent to-100%">
            <div className="ml-[5%] mr-[5%] h-px bg-[#3c3c3c]" />
          </div>
          <form className="flex w-full max-w-[646px] gap-2 pb-4 pt-2" onSubmit={(e) => e.preventDefault()}>
            <div className="relative flex h-12 flex-1 items-center rounded-l-[15px] rounded-tr-[15px] bg-[#212121] pl-4 pr-3 text-[#949494]">
              <button type="button" aria-label="Choose emoji">
                <SmileIcon />
              </button>
              <span className="ml-3 h-[19px] w-px bg-white" aria-hidden="true" />
              <input
                type="text"
                aria-label="Message"
                placeholder="Message"
                className="min-w-0 flex-1 bg-transparent pt-[2px] text-white outline-none placeholder:text-[#a2a2a2]"
              />
              <button type="button" aria-label="Attach file">
                <ClipIcon />
              </button>
              <span className="absolute right-[52px] top-[22px] flex size-5 items-center justify-center rounded-full bg-[#1877f2] text-white">
                <Stroke className="size-[10px]" width={4}>
                  <path d="M4 13l5 5L20 7" />
                </Stroke>
              </span>
              <Tail side="right" className="text-[#212121]" />
              <span
                lang="ar"
                dir="rtl"
                className="pointer-events-none absolute left-[264px] top-[21px] whitespace-nowrap font-['DejaVu_Sans',sans-serif] text-[28px] font-bold leading-8 text-[#606060]"
              >
                خـ5ـسات
              </span>
            </div>
            <button
              type="button"
              aria-label="Record voice message"
              className="flex size-12 items-center justify-center rounded-full bg-[#212121] text-[#949494]"
            >
              <MicIcon />
            </button>
          </form>
        </footer>
      </div>
    </div>
  );
}
